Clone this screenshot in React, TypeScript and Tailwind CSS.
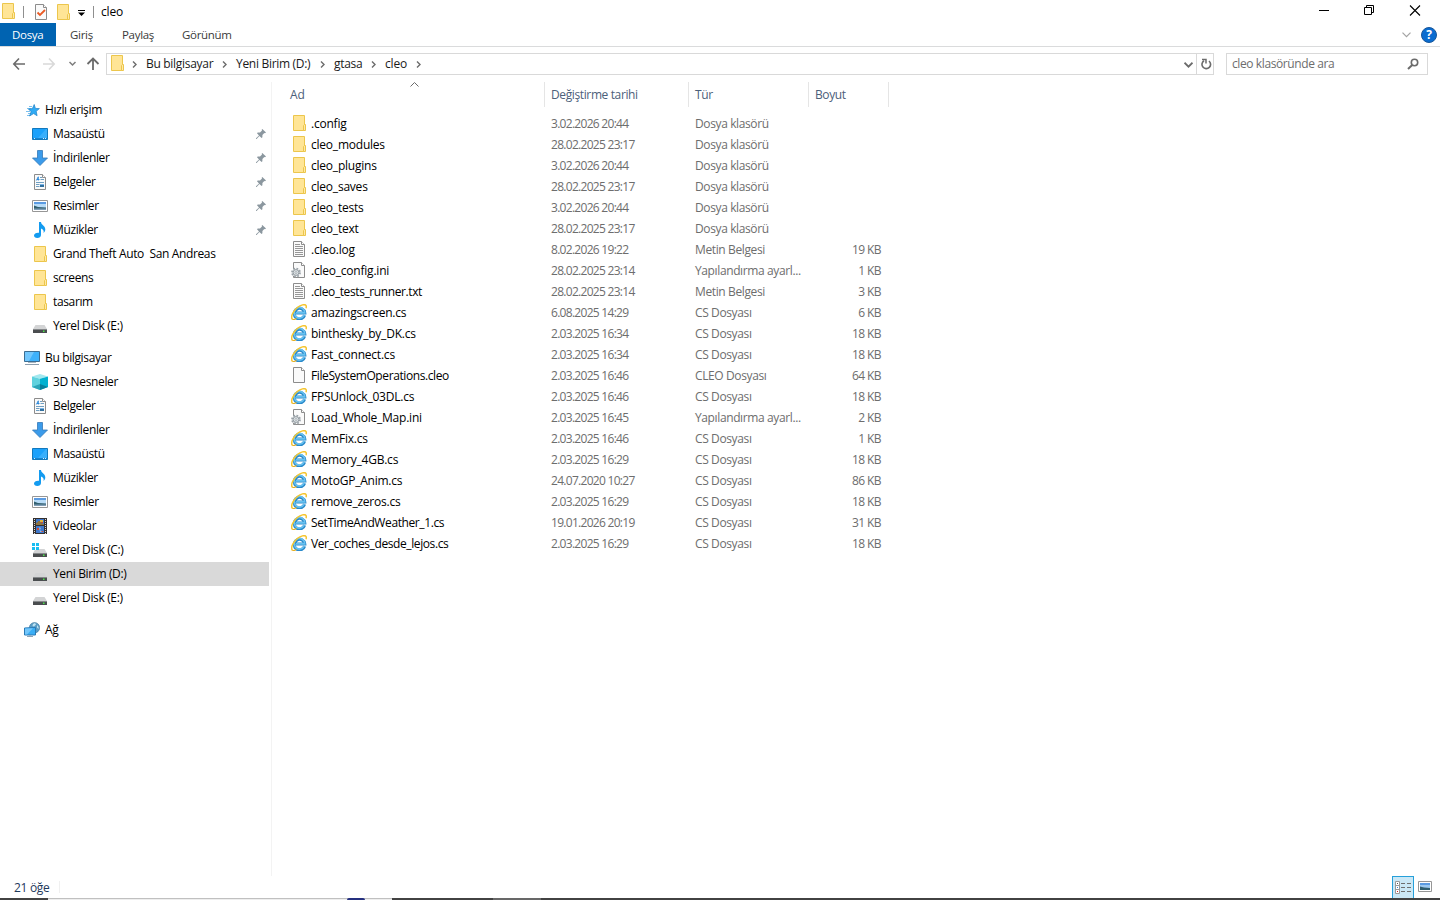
import React from 'react';
import clsx from 'clsx';

type IconName =
  | 'folder' | 'star' | 'desktop' | 'download' | 'document' | 'picture' | 'music'
  | 'drive' | 'systemDrive' | 'computer' | 'cube' | 'video' | 'network'
  | 'text' | 'config' | 'blank' | 'ie' | 'check';

interface NavItem {
  label: string;
  icon: IconName;
  pinned?: boolean;
  selected?: boolean;
}

interface NavGroup {
  label: string;
  icon: IconName;
  items: NavItem[];
}

interface FileRow {
  name: string;
  icon: IconName;
  date: string;
  type: string;
  size?: string;
}

const navGroups: NavGroup[] = [
  {
    label: 'Hızlı erişim',
    icon: 'star',
    items: [
      { label: 'Masaüstü', icon: 'desktop', pinned: true },
      { label: 'İndirilenler', icon: 'download', pinned: true },
      { label: 'Belgeler', icon: 'document', pinned: true },
      { label: 'Resimler', icon: 'picture', pinned: true },
      { label: 'Müzikler', icon: 'music', pinned: true },
      { label: 'Grand Theft Auto  San Andreas', icon: 'folder' },
      { label: 'screens', icon: 'folder' },
      { label: 'tasarım', icon: 'folder' },
      { label: 'Yerel Disk (E:)', icon: 'drive' },
    ],
  },
  {
    label: 'Bu bilgisayar',
    icon: 'computer',
    items: [
      { label: '3D Nesneler', icon: 'cube' },
      { label: 'Belgeler', icon: 'document' },
      { label: 'İndirilenler', icon: 'download' },
      { label: 'Masaüstü', icon: 'desktop' },
      { label: 'Müzikler', icon: 'music' },
      { label: 'Resimler', icon: 'picture' },
      { label: 'Videolar', icon: 'video' },
      { label: 'Yerel Disk (C:)', icon: 'systemDrive' },
      { label: 'Yeni Birim (D:)', icon: 'drive', selected: true },
      { label: 'Yerel Disk (E:)', icon: 'drive' },
    ],
  },
  { label: 'Ağ', icon: 'network', items: [] },
];

const files: FileRow[] = [
  { name: '.config', icon: 'folder', date: '3.02.2026 20:44', type: 'Dosya klasörü' },
  { name: 'cleo_modules', icon: 'folder', date: '28.02.2025 23:17', type: 'Dosya klasörü' },
  { name: 'cleo_plugins', icon: 'folder', date: '3.02.2026 20:44', type: 'Dosya klasörü' },
  { name: 'cleo_saves', icon: 'folder', date: '28.02.2025 23:17', type: 'Dosya klasörü' },
  { name: 'cleo_tests', icon: 'folder', date: '3.02.2026 20:44', type: 'Dosya klasörü' },
  { name: 'cleo_text', icon: 'folder', date: '28.02.2025 23:17', type: 'Dosya klasörü' },
  { name: '.cleo.log', icon: 'text', date: '8.02.2026 19:22', type: 'Metin Belgesi', size: '19 KB' },
  { name: '.cleo_config.ini', icon: 'config', date: '28.02.2025 23:14', type: 'Yapılandırma ayarl...', size: '1 KB' },
  { name: '.cleo_tests_runner.txt', icon: 'text', date: '28.02.2025 23:14', type: 'Metin Belgesi', size: '3 KB' },
  { name: 'amazingscreen.cs', icon: 'ie', date: '6.08.2025 14:29', type: 'CS Dosyası', size: '6 KB' },
  { name: 'binthesky_by_DK.cs', icon: 'ie', date: '2.03.2025 16:34', type: 'CS Dosyası', size: '18 KB' },
  { name: 'Fast_connect.cs', icon: 'ie', date: '2.03.2025 16:34', type: 'CS Dosyası', size: '18 KB' },
  { name: 'FileSystemOperations.cleo', icon: 'blank', date: '2.03.2025 16:46', type: 'CLEO Dosyası', size: '64 KB' },
  { name: 'FPSUnlock_03DL.cs', icon: 'ie', date: '2.03.2025 16:46', type: 'CS Dosyası', size: '18 KB' },
  { name: 'Load_Whole_Map.ini', icon: 'config', date: '2.03.2025 16:45', type: 'Yapılandırma ayarl...', size: '2 KB' },
  { name: 'MemFix.cs', icon: 'ie', date: '2.03.2025 16:46', type: 'CS Dosyası', size: '1 KB' },
  { name: 'Memory_4GB.cs', icon: 'ie', date: '2.03.2025 16:29', type: 'CS Dosyası', size: '18 KB' },
  { name: 'MotoGP_Anim.cs', icon: 'ie', date: '24.07.2020 10:27', type: 'CS Dosyası', size: '86 KB' },
  { name: 'remove_zeros.cs', icon: 'ie', date: '2.03.2025 16:29', type: 'CS Dosyası', size: '18 KB' },
  { name: 'SetTimeAndWeather_1.cs', icon: 'ie', date: '19.01.2026 20:19', type: 'CS Dosyası', size: '31 KB' },
  { name: 'Ver_coches_desde_lejos.cs', icon: 'ie', date: '2.03.2025 16:29', type: 'CS Dosyası', size: '18 KB' },
];

const Page = ({ children }: { children?: React.ReactNode }) => (
  <>
    <path d="M2.5.5h8l3 3v12h-11z" fill="#fafafa" stroke="#8c8c8c" />
    <path d="M10.5.5v3h3" fill="#fff" stroke="#8c8c8c" />
    {children}
  </>
);

const DriveBody = () => (
  <>
    <path d="M3.5 7h9L15 11H1z" fill="#d3d4d5" />
    <path d="M1 11h14v4H1z" fill="#4a4d4f" />
    <path d="M1 11h14v1H1z" fill="#85888a" />
    <path d="M11 12.5h1.5V14H11z" fill="#4be84b" />
  </>
);

const glyphs: Record<IconName, React.ReactNode> = {
  folder: (
    <>
      <path d="M2.5.5h11v15h-11z" fill="#ffe596" stroke="#ecc64c" />
      <path d="M12.5 15.5v-5l1-1h1v6z" fill="#ffe9a6" stroke="#ecc64c" />
    </>
  ),
  star: (
    <>
      <path d="M5 4.500h3M3 6.500h4M2 9.500h4M4 11.500h3M3 13.500h3" stroke="#7cc0ee" />
      <path d="M10.200 2.500l1.200 3.900 4 .2-3.200 2.700.9 4.400-3.500-2.100-4 2.400 1.500-4.300-2.600-2.700 3.900-.4z" fill="#2fabf5" stroke="#1d7fc6" strokeWidth=".7" />
    </>
  ),
  desktop: (
    <>
      <path d="M.5 2.500h15v11H.5z" fill="#1ba1fb" stroke="#1279bd" />
      <path d="M6 12L14 3h1v9z" fill="#39affc" />
      <path d="M1 12.500h14" stroke="#1583cf" />
      <path d="M2 12.500h1M11 12.500h1M13 12.500h1" stroke="#d8effd" />
    </>
  ),
  download: <path d="M5.500.5h5v7.500h5L8 15.500.5 8h5z" fill="#3b9bea" stroke="#3579b8" strokeWidth=".8" />,
  document: (
    <Page>
      <path d="M4.300 6.500L6.300 2.800V6.500M5 5.500h2.500" stroke="#2383d8" strokeWidth=".9" />
      <path d="M8 3.500h2M8.500 5.500h3.500M4 8.500h8M4 10.500h3.500M4 12.500h3.500" stroke="#6f9fc2" />
      <path d="M8 10h4v3H8z" fill="#316f9e" />
      <path d="M8 10h4v1H8z" fill="#77b4e8" />
    </Page>
  ),
  picture: (
    <>
      <path d="M.5 2.500h15v11H.5z" fill="#fff" stroke="#969696" />
      <path d="M2 4h12v8H2z" fill="#b7dbf7" />
      <path d="M2 4h12v2H2z" fill="#5b9be2" />
      <path d="M2 7.500l4 1.500 8 .5V11H2z" fill="#315f6f" />
      <path d="M2 10.500h12V12H2z" fill="#7f9eb7" />
    </>
  ),
  music: <path d="M7 0h2c.3 3.400 4.300 3.400 4.300 7.500 0 1.500-.8 2.800-1.800 3.500.7-2.300-.3-4-2.500-4.600V13c0 1.700-1.600 3-3.700 3S2 15 2 13.600c0-1.700 2.300-3.200 5-2.800z" fill="#139bf0" />,
  drive: <DriveBody />,
  systemDrive: (
    <>
      <DriveBody />
      <path d="M0 1h7v7H0z" fill="#fff" />
      <path d="M0 1h3v3H0zM4 1h3v3H4zM0 5h3v3H0zM4 5h3v3H4z" fill="#18bdf2" />
    </>
  ),
  computer: (
    <>
      <path d="M.5 1.500h15v10H.5z" fill="#3eb1fb" stroke="#3c6d92" />
      <path d="M1 2h9L5 11H1z" fill="#72c7fd" />
      <path d="M4 12.500h8" stroke="#a7b5c0" />
      <path d="M1 14.500h14" stroke="#8b9dad" />
    </>
  ),
  cube: (
    <>
      <path d="M8 0l8 2.500-8 2.300L0 2.500z" fill="#a3e8ef" />
      <path d="M0 2.500l8 2.300V16l-8-3z" fill="#5fd2de" />
      <path d="M16 2.500L8 4.800V16l8-3z" fill="#00b0d0" />
      <path d="M0 13l8-3v6z" fill="#2ba5b8" />
      <path d="M16 13l-8-3v6z" fill="#067f9c" />
    </>
  ),
  video: (
    <>
      <path d="M1 0h14v16H1z" fill="#34302f" />
      <path d="M2.500 1v15M13.500 1v15" stroke="#d8d8d8" strokeDasharray="1 1" />
      <path d="M4 1h8v6H4zM4 8h8v7H4z" fill="#3f78cc" />
      <path d="M4 5l2-1V3h2l1 2 3 1v1H4z" fill="#8f7440" />
      <path d="M8 2h3v2H8z" fill="#e0b53a" />
      <path d="M9 4h2v1H9zM5 10h2v2H5zM9 13h2v1H9z" fill="#d04a33" />
      <path d="M7 9l2 1-1 2 2 2H8z" fill="#8dbbe8" />
    </>
  ),
  network: (
    <>
      <circle cx="10.500" cy="5.700" r="5.200" fill="#5a9cc4" stroke="#41799e" strokeWidth=".6" />
      <path d="M9 2l2-1 1 1.500-2 2-1.500-.5zM13 3l1.500 2v2l-1.500-1.500z" fill="#bfe2f2" />
      <path d="M.5 6l11-.5v7.500H.5z" fill="#3aaef5" stroke="#2a79b4" />
      <path d="M1 6.500l8-.3L3 12.500H1z" fill="#72c6fb" />
      <path d="M3 14.500h6M6 13v1" stroke="#8ca4b6" />
    </>
  ),
  text: (
    <Page>
      <path d="M4 3.500h5M4 5.500h8M4 7.500h8M4 9.500h8M4 11.500h8M4 13.500h8" stroke="#979797" />
    </Page>
  ),
  config: (
    <Page>
      <circle cx="5" cy="10.500" r="4" fill="#eef1f2" stroke="#9aa2a8" strokeWidth="1.800" strokeDasharray="1.700 1.440" />
      <circle cx="5" cy="10.500" r="2.900" fill="#dfe4e7" stroke="#939ba1" strokeWidth="1" />
      <circle cx="5" cy="10.500" r="1" fill="#fff" stroke="#8d969d" strokeWidth=".7" />
    </Page>
  ),
  blank: <Page />,
  ie: (
    <>
      <path d="M13.600 11.300A5.300 5.300 0 1 1 13.800 9H5" fill="none" stroke="#2a8acb" strokeWidth="3" />
      <path d="M13.200 11A5.300 5.300 0 1 1 13.700 8.800H5" fill="none" stroke="#67c1f0" strokeWidth="1.700" />
      <path d="M1.300 15.300C-1 12 4 3 11.500.9 14.700 0 15.900 1.500 15 4.300" fill="none" stroke="#f5c530" strokeWidth="1.500" />
      <path d="M1.300 15.300c1.200.6 3 0 4.200-.9" fill="none" stroke="#e6ae22" strokeWidth="1.100" />
    </>
  ),
  check: (
    <Page>
      <path d="M4.500 8.500l2.500 2.500L12 6" fill="none" stroke="#ea5a24" strokeWidth="1.800" />
    </Page>
  ),
};

const Icon = ({ name, className }: { name: IconName; className?: string }) => (
  <svg viewBox="0 0 16 16" fill="none" className={clsx('h-4 w-4 shrink-0', className)}>
    {glyphs[name]}
  </svg>
);

const Crumb = ({ className }: { className?: string }) => (
  <svg viewBox="0 0 5 7" className={clsx('h-[7px] w-[5px] shrink-0', className)} fill="none">
    <path d="M1 .5l3 3-3 3" stroke="#6b6b6b" strokeWidth="1.400" />
  </svg>
);

const Pin = () => (
  <svg viewBox="0 0 10 10" className="mr-[3px] h-[10px] w-[10px]">
    <path d="M6.300 0L10 3.500 9 4.300l-.7-.2L6.400 6v2.300l-.8.7-2.200-2L.6 10H0v-.7L3 6.600 1 4.300 1.700 3.600H4l2-2L5.700.7z" fill="#8b979f" />
  </svg>
);

const TitleBar = () => (
  <div className="flex h-[23px] shrink-0 justify-between">
    <div className="flex items-center">
      <Icon name="folder" className="-mt-px" />
      <div className="ml-[7px] h-3 w-px bg-[#8f8f8f]" />
      <Icon name="check" className="ml-[9px] mt-px" />
      <Icon name="folder" className="ml-[6px] mt-px" />
      <svg viewBox="0 0 7 6" className="ml-[7px] mt-[3px] h-[6px] w-[7px]">
        <path d="M0 0h7v1H0zM0 2.500h7L3.500 6z" fill="#000" />
      </svg>
      <div className="ml-2 h-3 w-px bg-[#8f8f8f]" />
      <span className="ml-[7px] tracking-[-0.2px] text-black">cleo</span>
    </div>
    <svg viewBox="0 0 121 23" className="h-[23px] w-[121px]" fill="none" stroke="#000">
      <path d="M0 10.500h10M45.500 7.500h7v7h-7zM47.500 7V5.500h7v7H53" />
      <path d="M91 5.500l10 10M101 5.500l-10 10" strokeWidth="1.100" />
    </svg>
  </div>
);

const RibbonTabs = () => (
  <div className="flex h-6 shrink-0 border-b border-[#dadbdc] text-[11.500px] text-[#3a3a3a]">
    <div className="flex h-[23px] w-14 items-center bg-[#0063b1] pl-3 text-white">Dosya</div>
    <div className="flex w-[52px] items-center pl-[14px]">Giriş</div>
    <div className="flex w-[60px] items-center pl-[14px]">Paylaş</div>
    <div className="flex items-center pl-[14px]">Görünüm</div>
    <div className="ml-auto flex items-center gap-[10px] pr-[3px]">
      <svg viewBox="0 0 9 6" className="h-[6px] w-[9px]" fill="none">
        <path d="M.5.700l4 4 4-4" stroke="#a3a3a3" strokeWidth="1.200" />
      </svg>
      <div className="flex h-4 w-4 items-center justify-center rounded-full border border-[#17569a] bg-[#0a6cd0] text-[12px] font-bold text-white">
        ?
      </div>
    </div>
  </div>
);

const AddressBar = () => (
  <div className="flex h-[35px] shrink-0 pt-[6px]">
    <svg viewBox="0 0 106 22" className="h-[22px] w-[106px]" fill="none">
      <path d="M25 11H14M19 5.500L13.800 11l5.200 5.500" stroke="#6b6b6b" strokeWidth="1.600" />
      <path d="M43 11h11M49 5.500l5.200 5.500-5.200 5.500" stroke="#d9d9d9" strokeWidth="1.600" />
      <path d="M69.500 9l3 3 3-3" stroke="#7d7d7d" strokeWidth="1.500" />
      <path d="M93 17V6M87.500 11L93 5.500 98.500 11" stroke="#6b6b6b" strokeWidth="1.800" />
    </svg>
    <div className="flex h-[22px] w-[1108px] items-center border border-[#d9d9d9] leading-[18px] text-[#1a1a1a]">
      <Icon name="folder" className="-mt-[2px] ml-[2px]" />
      <Crumb className="ml-[7px]" />
      <div className="ml-[9px] flex w-[90px] items-center justify-between pr-[9px]">Bu bilgisayar<Crumb /></div>
      <div className="flex w-[98px] items-center justify-between pr-[9px]">Yeni Birim (D:)<Crumb /></div>
      <div className="flex w-[51px] items-center justify-between pr-[9px] tracking-[-0.3px]">gtasa<Crumb /></div>
      <div className="flex w-[45px] items-center justify-between pr-[9px] tracking-[-0.2px]">cleo<Crumb /></div>
      <svg viewBox="0 0 9 6" className="ml-auto mr-[3px] mt-[2px] h-[6px] w-[9px]" fill="none">
        <path d="M.5.700l4 4 4-4" stroke="#6b6b6b" strokeWidth="1.800" />
      </svg>
      <div className="flex h-full w-[17px] items-center justify-center border-l border-[#d9d9d9]">
        <svg viewBox="0 0 11 12" className="ml-[2px] h-3 w-[11px]" fill="none">
          <path d="M8 3a4.300 4.300 0 1 1-5-.3" stroke="#6b6b6b" strokeWidth="1.600" />
          <path d="M1 1.500h4v4" stroke="#6b6b6b" strokeWidth="1.500" />
        </svg>
      </div>
    </div>
    <div className="ml-3 flex h-[22px] w-[202px] items-center justify-between border border-[#d9d9d9] pl-[5px] pr-[8px] leading-[18px] tracking-[-0.4px] text-[#6d6d6d]">
      cleo klasöründe ara
      <svg viewBox="0 0 12 12" className="h-3 w-3" fill="none" stroke="#6b6b6b">
        <circle cx="7.500" cy="4.500" r="3.200" strokeWidth="1.600" />
        <path d="M5.200 7L1 11" strokeWidth="2" />
      </svg>
    </div>
  </div>
);

const NavPane = () => (
  <div className="flex w-[272px] shrink-0 flex-col gap-2 border-r border-[#f3f3f3] pt-4 leading-6 tracking-[-0.36px] text-black">
    {navGroups.map((group) => (
      <div key={group.label}>
        <div className="flex h-6 gap-[5px] pl-6">
          <Icon name={group.icon} className="mt-1" />
          {group.label}
        </div>
        {group.items.map((item) => (
          <div
            key={item.label}
            className={clsx('flex h-6 w-[269px] pl-8', item.selected && 'bg-[#d9d9d9]')}
          >
            <Icon name={item.icon} className="mt-1" />
            <span className="ml-[5px] flex-1 whitespace-pre">{item.label}</span>
            {item.pinned && <div className="pt-[7px]"><Pin /></div>}
          </div>
        ))}
      </div>
    ))}
  </div>
);

const FileList = () => (
  <div className="flex-1 pl-[18px]">
    <div className="flex h-[25px] leading-[25px] tracking-[-0.38px] text-[#4c607a]">
      <div className="relative h-full w-[255px] border-r border-[#e5e5e5] tracking-normal">
        Ad
        <svg viewBox="0 0 9 5" className="absolute left-[120px] top-0 h-[5px] w-[9px]" fill="none">
          <path d="M.5 4.500l4-4 4 4" stroke="#6b6b6b" />
        </svg>
      </div>
      <div className="h-full w-36 border-r border-[#e5e5e5] pl-[6px]">Değiştirme tarihi</div>
      <div className="h-full w-[120px] border-r border-[#e5e5e5] pl-[6px]">Tür</div>
      <div className="h-full w-20 border-r border-[#e5e5e5] pl-[6px]">Boyut</div>
    </div>
    <div className="pt-[6px]">
      {files.map((file) => (
        <div key={file.name} className="flex h-[21px] leading-[21px] tracking-[-0.38px] text-[#6d6d6d]">
          <div className={clsx('flex w-[261px] gap-1 pl-px text-black', file.name.length > 18 ? 'tracking-[-0.4px]' : 'tracking-[-0.22px]')}>
            <Icon name={file.icon} className="mt-[2px]" />
            {file.name}
          </div>
          <div className="w-36 tracking-[-0.71px]">{file.date}</div>
          <div className="w-[120px]">{file.type}</div>
          <div className="w-[66px] text-right tracking-[-0.6px]">{file.size}</div>
        </div>
      ))}
    </div>
  </div>
);

const StatusBar = () => (
  <div className="flex h-[22px] shrink-0 items-center text-[#1e395b]">
    <span className="w-[59px] pl-[14px] pt-[2px]">21 öğe</span>
    <div className="h-3 w-px bg-[#f0f0f0]" />
    <div className="ml-auto flex h-full w-[22px] items-center justify-center border border-b-0 border-[#26a0da] bg-[#cbe8f6]">
      <svg viewBox="0 0 16 13" className="h-[13px] w-4" fill="none">
        <path d="M.5.500h4v12h-4zM.5 4.500h4M.5 8.500h4" fill="#fff" stroke="#9a9a9a" />
        <path d="M2 2.500h1" stroke="#555" />
        <path d="M2 6.500h1" stroke="#3f7fd0" />
        <path d="M2 10.500h1" stroke="#c22" />
        <path d="M6 2.500h4M12 2.500h4M6 6.500h4M12 6.500h4M6 10.500h4M12 10.500h4" stroke="#6f6f6f" />
      </svg>
    </div>
    <svg viewBox="0 0 14 11" className="-mt-px ml-1 mr-2 h-[11px] w-[14px]">
      <path d="M.5.500h13v10H.5z" fill="#fff" stroke="#969696" />
      <path d="M2 2h10v7H2z" fill="#9cc8f0" />
      <path d="M2 2h10v2H2z" fill="#5b9be2" />
      <path d="M2 5.500l4 1 6 .5v2H2z" fill="#315f6f" />
    </svg>
  </div>
);

// sliver of the desktop left visible under the window
const DesktopEdge = () => (
  <div className="flex h-[2px] shrink-0 bg-[#424242]">
    <div className="ml-12 flex w-[344px] border-t border-[#c0c0c0] bg-[#eeeeee]">
      <div className="-mt-px ml-[299px] h-[2px] w-[18px] rounded-t-full bg-[#25307f]" />
    </div>
    <div className="ml-[101px] w-12 bg-[#686868]" />
  </div>
);

export default function App() {
  return (
    <div className="flex h-[900px] w-[1440px] flex-col overflow-hidden bg-white font-['Open_Sans','Noto_Sans',sans-serif] text-[12px] leading-4 tracking-[-0.3px]">
      <TitleBar />
      <RibbonTabs />
      <AddressBar />
      <div className="flex h-[794px] shrink-0">
        <NavPane />
        <FileList />
      </div>
      <StatusBar />
      <DesktopEdge />
    </div>
  );
}
